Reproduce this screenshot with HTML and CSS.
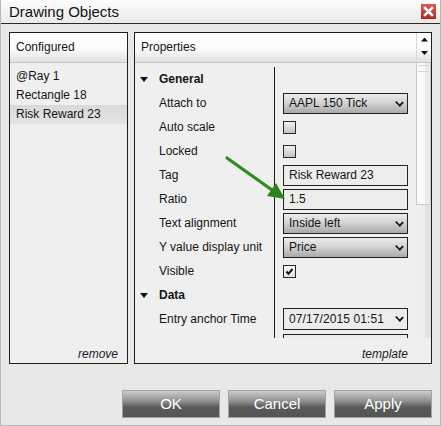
FILE: index.html
```html
<!DOCTYPE html>
<html>
<head>
<meta charset="utf-8">
<link rel="stylesheet" href="styles.css">
</head>
<body>
<div class="dialog">
  <div class="titlebar">
    <span class="title">Drawing Objects</span>
    <svg class="close" width="15" height="15" viewBox="0 0 15 15">
      <defs>
        <linearGradient id="cg" x1="0" y1="0" x2="0" y2="1">
          <stop offset="0" stop-color="#e0584f"/>
          <stop offset="1" stop-color="#b3251f"/>
        </linearGradient>
      </defs>
      <rect x="0" y="0" width="15" height="15" fill="url(#cg)"/>
      <path d="M4 4 L11 11 M11 4 L4 11" stroke="#fff" stroke-width="2.6" stroke-linecap="square"/>
    </svg>
  </div>
  <div class="main">
    <div class="panel left">
      <div class="phead"><span class="ptitle">Configured</span></div>
      <ul class="list">
        <li>@Ray 1</li>
        <li>Rectangle 18</li>
        <li class="sel">Risk Reward 23</li>
      </ul>
      <div class="pfoot">remove</div>
    </div>
    <div class="panel right">
      <div class="phead">
        <span class="ptitle">Properties</span>
        <div class="arrows">
          <svg width="14" height="29" viewBox="0 0 14 29">
            <path d="M4 8.5 L11 8.5 L7.5 4.5 Z" fill="#111"/>
            <path d="M4 18 L11 18 L7.5 22 Z" fill="#111"/>
          </svg>
        </div>
      </div>
      <div class="pbody">
        <div class="grid">
          <div class="row section"><div class="lab"><span class="tri"></span>General</div><div class="val"></div></div>
          <div class="row"><div class="lab">Attach to</div><div class="val"><div class="drop">AAPL 150 Tick<span class="chev"></span></div></div></div>
          <div class="row"><div class="lab">Auto scale</div><div class="val"><span class="check"></span></div></div>
          <div class="row"><div class="lab">Locked</div><div class="val"><span class="check"></span></div></div>
          <div class="row"><div class="lab">Tag</div><div class="val"><div class="text">Risk Reward 23</div></div></div>
          <div class="row"><div class="lab">Ratio</div><div class="val"><div class="text">1.5</div></div></div>
          <div class="row"><div class="lab">Text alignment</div><div class="val"><div class="drop">Inside left<span class="chev"></span></div></div></div>
          <div class="row"><div class="lab">Y value display unit</div><div class="val"><div class="drop">Price<span class="chev"></span></div></div></div>
          <div class="row"><div class="lab">Visible</div><div class="val"><span class="check on"><svg width="11" height="11" viewBox="0 0 11 11"><path d="M2.5 5.5 L4.5 7.8 L8.5 3" stroke="#111" stroke-width="2" fill="none"/></svg></span></div></div>
          <div class="row section"><div class="lab"><span class="tri"></span>Data</div><div class="val"></div></div>
          <div class="row"><div class="lab">Entry anchor Time</div><div class="val"><div class="drop flat"><span class="clip">07/17/2015 01:51</span><span class="chev"></span></div></div></div>
          <div class="row"><div class="lab"></div><div class="val"><div class="text cut"></div></div></div>
        </div>
        <div class="scroll"><div class="thumb"></div></div>
      </div>
      <div class="pfoot">template</div>
    </div>
  </div>
  <div class="buttons">
    <button class="btn">OK</button>
    <button class="btn">Cancel</button>
    <button class="btn">Apply</button>
  </div>
  <svg class="pointer" width="441" height="426" viewBox="0 0 441 426">
    <line x1="227" y1="158" x2="272" y2="190" stroke="#2d8c1e" stroke-width="3.2" stroke-linecap="round"/>
    <path d="M285 199 L267 196 L276 183 Z" fill="#2a861b"/>
  </svg>
</div>
</body>
</html>
```
FILE: styles.css
```css
* { box-sizing: border-box; }
html, body { margin: 0; padding: 0; background: #e8e8e8; }
body {
  font-family: "Liberation Sans", Arial, sans-serif;
  font-size: 12px;
  color: #151515;
}
.dialog {
  position: relative;
  width: 441px;
  height: 426px;
  background: #e8e8e8;
  border: 1px solid #b8b8b8;
  border-top: none;
  display: flex;
  flex-direction: column;
}
.titlebar {
  height: 24px;
  border-bottom: 1px solid #2a2a2a;
  background: linear-gradient(#fdfdfd, #e9e9e9);
  display: flex;
  align-items: center;
  justify-content: space-between;
  padding: 0 4px 0 8px;
}
.title { font-size: 15px; color: #111; line-height: 23px; }
.close { display: block; margin-top: -1px; }
.main {
  display: flex;
  gap: 6px;
  padding: 8px 8px 0 8px;
}
.panel {
  height: 332px;
  border: 1px solid #1e1e1e;
  background: #efefef;
  display: flex;
  flex-direction: column;
}
.panel.left { width: 119px; }
.panel.right { width: 298px; }
.phead {
  height: 30px;
  flex: none;
  display: flex;
  border-bottom: 1px solid #c6c6c6;
  background: linear-gradient(#ffffff 0%, #fbfbfb 55%, #e0e0e0 100%);
}
.ptitle { flex: 1; padding-left: 6px; line-height: 29px; }
.arrows { width: 15px; border-left: 1px solid #d6d6d6; }
.arrows svg { display: block; }
.list { list-style: none; margin: 0; padding: 4px 0 0 0; flex: 1; }
.list li { height: 19px; line-height: 19px; padding-left: 6px; }
.list li.sel { background: linear-gradient(#d9d9d9, #e4e4e4); }
.pfoot {
  height: 25px;
  flex: none;
  padding-top: 8px;
  line-height: 16px;
  text-align: right;
  font-style: italic;
  color: #1c1c2c;
  padding-right: 9px;
}
.panel.right .pfoot { padding-right: 23px; }
.pbody {
  height: 275px;
  flex: none;
  display: flex;
  overflow: hidden;
}
.grid { flex: 1; padding-top: 4px; }
.row {
  display: grid;
  grid-template-columns: 139px 1fr;
  height: 24px;
}
.lab {
  padding-left: 24px;
  line-height: 24px;
  white-space: nowrap;
  position: relative;
}
.section .lab { font-weight: bold; }
.tri {
  position: absolute;
  left: 5px;
  top: 10px;
  width: 0; height: 0;
  border-left: 4px solid transparent;
  border-right: 4px solid transparent;
  border-top: 5px solid #111;
}
.val {
  border-left: 1px solid #1e1e1e;
  padding-left: 8px;
  display: flex;
  align-items: center;
}
.drop, .text {
  width: 125px;
  height: 21px;
  border: 1px solid #222;
  padding-left: 5px;
  line-height: 19px;
  position: relative;
  white-space: nowrap;
  overflow: hidden;
}
.drop { background: linear-gradient(#ececec 0%, #d4d4d4 45%, #a9a9a9 100%); }
.drop.flat { background: #ececec; height: 22px; line-height: 20px; }
.clip { display: inline-block; width: 100px; overflow: hidden; vertical-align: top; letter-spacing: 0.1px; }
.text { background: #ececec; }
.text.cut { align-self: flex-start; margin-top: 3px; }
.chev {
  position: absolute;
  right: 4px;
  top: 5px;
  width: 7px;
  height: 7px;
  border-right: 2px solid #111;
  border-bottom: 2px solid #111;
  transform: rotate(45deg) scale(0.95, 0.8);
  transform-origin: center;
}
.check {
  width: 13px;
  height: 13px;
  border: 1px solid #2a2a2a;
  background: linear-gradient(#f2f2f2, #c4c4c4);
  display: block;
}
.check.on { background: linear-gradient(#fafafa, #dedede); }
.check svg { display: block; }
.scroll {
  width: 15px;
  flex: none;
  background: linear-gradient(90deg, #ededed 0 9px, #e2e2e2 9px 15px);
}
.thumb {
  height: 143px;
  margin-top: -1px;
  border: 1px solid #c9c9c9;
  background: linear-gradient(90deg, #fbfbfb 0 8px, #ebebeb 8px 100%);
  position: relative;
}
.thumb::before {
  content: "";
  position: absolute;
  left: 1px; right: 1px; top: 2px;
  height: 5px;
  border-top: 1px solid #d4d4d4;
  border-bottom: 1px solid #d4d4d4;
}
.buttons {
  display: flex;
  justify-content: flex-end;
  gap: 8px;
  padding-right: 8px;
  margin-top: 26px;
}
.btn {
  width: 98px;
  height: 28px;
  border: 1px solid #a3a3a3;
  background: linear-gradient(#cdcdcd 0%, #8e8e8e 40%, #5a5a5a 62%, #545454 100%);
  color: #fff;
  font-family: "Liberation Sans", Arial, sans-serif;
  font-size: 15px;
  padding: 0;
  line-height: 26px;
}
.pointer {
  position: absolute;
  left: -1px;
  top: 0;
  pointer-events: none;
}
```
